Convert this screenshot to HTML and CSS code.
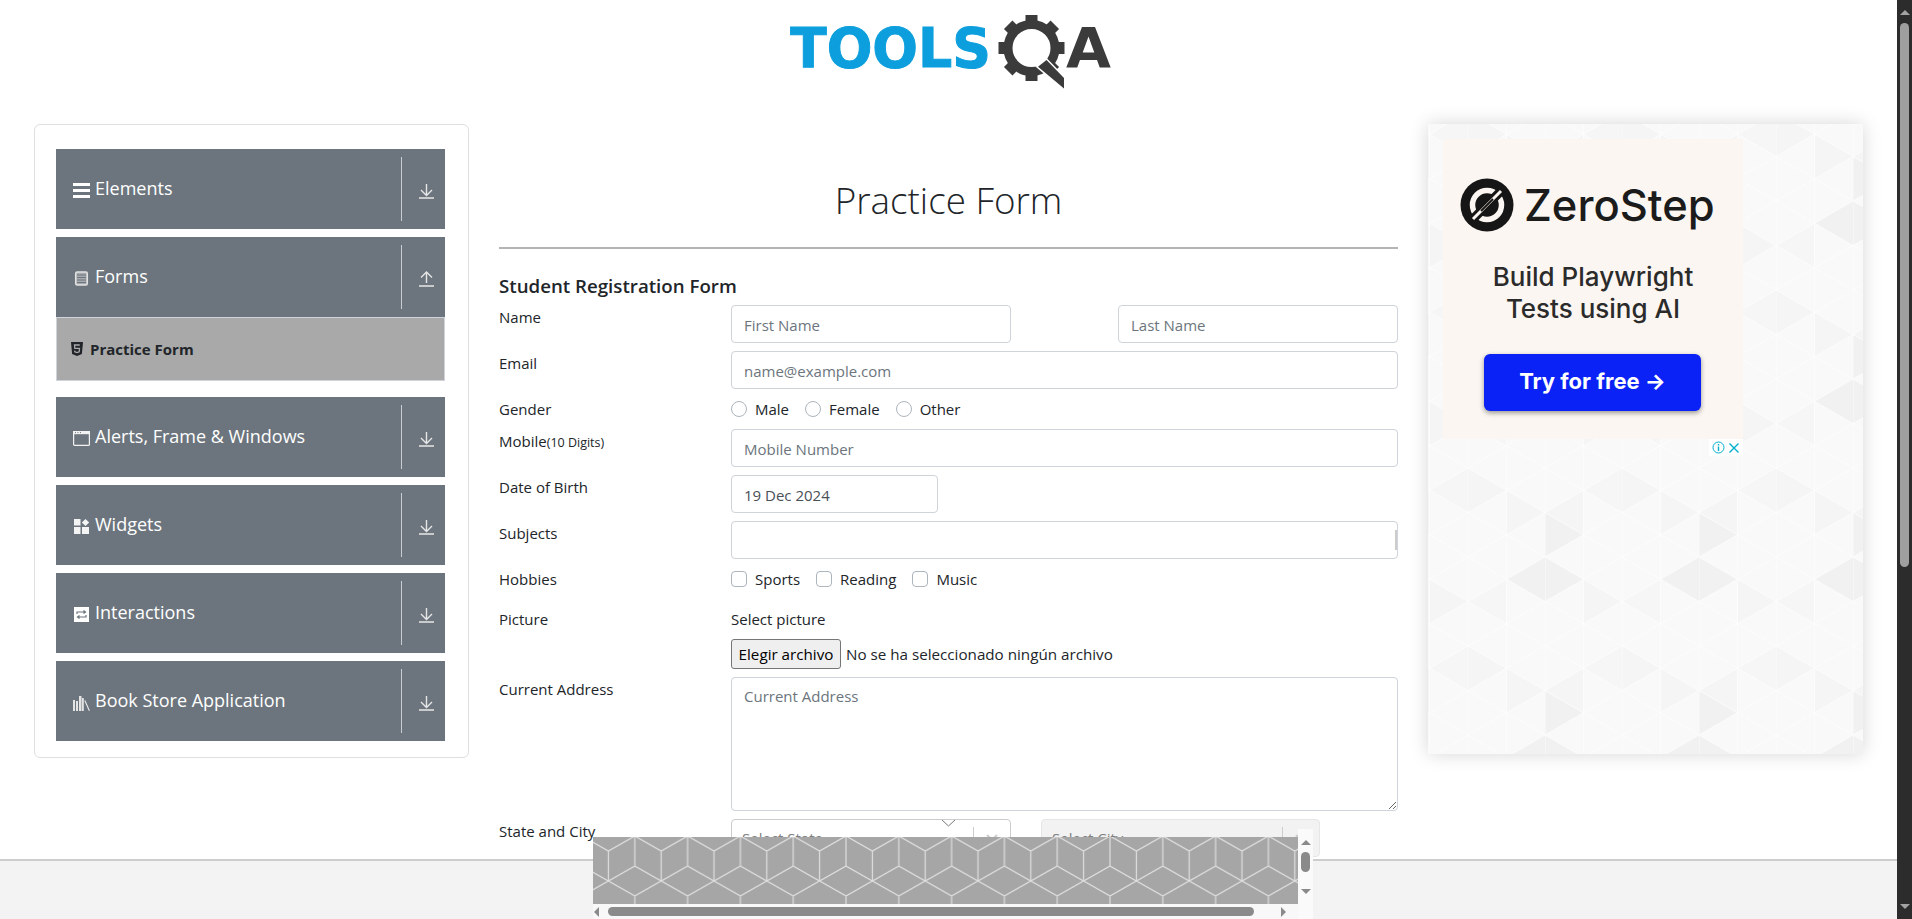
FILE: index.html
```html
<!DOCTYPE html>
<html>
  <head>
    <title>DEMOQA</title>
    <link rel="stylesheet" href="styles.css">
  </head>
  <body>
    <div class="window">
      <div class="page">
        <div class="page-body">
          <header class="logo-bar">
            <svg class="logo" width="330" height="92" viewBox="0 0 330 92">
              <text class="logo-tools" x="0" y="67" textLength="201" lengthAdjust="spacingAndGlyphs">TOOLS</text>
              <g class="gear-teeth">
                <rect x="235.500" y="15" width="12" height="66"/>
                <rect x="235.500" y="15" width="12" height="66" transform="rotate(45 241.500 48)"/>
                <rect x="235.500" y="15" width="12" height="66" transform="rotate(90 241.500 48)"/>
                <rect x="235.500" y="15" width="12" height="66" transform="rotate(135 241.500 48)"/>
              </g>
              <circle class="gear-ring" cx="241.500" cy="48" r="23.500"/>
              <path class="gear-handle" d="M256.500 60L274 78V88.500L248 66.700Z"/>
              <text class="logo-a" x="276" y="67" textLength="45" lengthAdjust="spacingAndGlyphs">A</text>
            </svg>
          </header>

          <div class="columns">
            <nav class="side-card">
              <div class="menu-item">
                <div class="menu-label">
                  <svg class="menu-icon" width="17" height="15" viewBox="0 0 17 15"><path fill="#fff" d="M0 0h17v3H0zM0 6h17v3H0zM0 12h17v3H0z"/></svg>
                  <span class="menu-text">Elements</span>
                </div>
                <div class="menu-toggle">
                  <svg width="15" height="16" viewBox="0 0 15 16"><path class="arrow-line" d="M0 15h15M7.500 1v11M2 7l5.500 5.500L13 7"/></svg>
                </div>
              </div>

              <div class="menu-group">
                <div class="menu-item">
                  <div class="menu-label">
                    <svg class="menu-icon" width="17" height="15" viewBox="0 0 17 15"><rect x="2.700" y="1" width="11.600" height="13" rx="1.500" fill="#a8abb0" stroke="#e2e2e2" stroke-width="1.500"/><path stroke="#6c757d" d="M4 4h9M4 6.500h9M4 9h9M4 11.500h9"/></svg>
                    <span class="menu-text">Forms</span>
                  </div>
                  <div class="menu-toggle">
                    <svg width="15" height="16" viewBox="0 0 15 16"><path class="arrow-line" d="M0 15h15M7.500 12V1M2 6.500L7.500 1 13 6.500"/></svg>
                  </div>
                </div>
                <div class="sub-item">
                  <svg width="12" height="14" viewBox="0 0 12 14"><path fill="#212529" d="M0 0h12l-1.100 12L6 14l-4.900-2z"/><path fill="none" stroke="#a9a9a9" stroke-width="1.300" d="M8.800 3H3.500l.3 3.300h4.700L8.200 9.800 6 10.500l-2.200-.7-.1-1.200"/></svg>
                  <span>Practice Form</span>
                </div>
              </div>

              <div class="menu-item">
                <div class="menu-label">
                  <svg class="menu-icon" width="17" height="15" viewBox="0 0 17 15"><rect x=".6" y=".6" width="15.800" height="13.800" rx="1" fill="none" stroke="#f2f2f2" stroke-width="1.200"/><path fill="#f2f2f2" d="M0 0h17v3.200H0z"/><path stroke="#6c757d" d="M2 1.600h1M4.500 1.600h1M7 1.600h1"/></svg>
                  <span class="menu-text">Alerts, Frame &amp; Windows</span>
                </div>
                <div class="menu-toggle">
                  <svg width="15" height="16" viewBox="0 0 15 16"><path class="arrow-line" d="M0 15h15M7.500 1v11M2 7l5.500 5.500L13 7"/></svg>
                </div>
              </div>

              <div class="menu-item">
                <div class="menu-label">
                  <svg class="menu-icon" width="17" height="15" viewBox="0 0 17 15"><path fill="#f4f4f4" d="M1 0h6.500v6.500H1zM1 8h6.500v7H1zM9 8h7v7H9zM12.500 0l3.700 3.500-3.700 3.500-3.700-3.500z"/></svg>
                  <span class="menu-text">Widgets</span>
                </div>
                <div class="menu-toggle">
                  <svg width="15" height="16" viewBox="0 0 15 16"><path class="arrow-line" d="M0 15h15M7.500 1v11M2 7l5.500 5.500L13 7"/></svg>
                </div>
              </div>

              <div class="menu-item">
                <div class="menu-label">
                  <svg class="menu-icon" width="17" height="15" viewBox="0 0 17 15"><path fill="#fff" d="M1 0h15v15H1z"/><path fill="none" stroke="#6c757d" stroke-width="1.200" d="M4 7V5h8M10.500 3.500L12.500 5l-2 1.500M13 8v2H5M6.500 8.500L4.500 10l2 1.500"/></svg>
                  <span class="menu-text">Interactions</span>
                </div>
                <div class="menu-toggle">
                  <svg width="15" height="16" viewBox="0 0 15 16"><path class="arrow-line" d="M0 15h15M7.500 1v11M2 7l5.500 5.500L13 7"/></svg>
                </div>
              </div>

              <div class="menu-item">
                <div class="menu-label">
                  <svg class="menu-icon" width="17" height="16" viewBox="0 0 17 16"><path fill="#e4e4e4" d="M0 5h2v11H0zM3 6h2v10H3zM6 1h2.500v15H6zM9 3h1.800v13H9z"/><path stroke="#e4e4e4" stroke-width="1.200" d="M11.800 5.500l4.600 10.300"/></svg>
                  <span class="menu-text">Book Store Application</span>
                </div>
                <div class="menu-toggle">
                  <svg width="15" height="16" viewBox="0 0 15 16"><path class="arrow-line" d="M0 15h15M7.500 1v11M2 7l5.500 5.500L13 7"/></svg>
                </div>
              </div>
            </nav>

            <main class="form-column">
              <h1 class="form-title">Practice Form</h1>
              <hr class="title-rule">
              <h5 class="form-heading">Student Registration Form</h5>
              <form class="student-form">
                <label class="field-label">Name</label>
                <div class="name-pair">
                  <input class="text-input" placeholder="First Name">
                  <input class="text-input" placeholder="Last Name">
                </div>

                <label class="field-label">Email</label>
                <input class="text-input" placeholder="name@example.com">

                <label class="field-label">Gender</label>
                <div class="choice-row">
                  <label class="choice"><input class="radio" type="radio" name="gender"><span>Male</span></label>
                  <label class="choice"><input class="radio" type="radio" name="gender"><span>Female</span></label>
                  <label class="choice"><input class="radio" type="radio" name="gender"><span>Other</span></label>
                </div>

                <label class="field-label">Mobile<small>(10 Digits)</small></label>
                <input class="text-input" placeholder="Mobile Number">

                <label class="field-label">Date of Birth</label>
                <input class="text-input date-input" value="19 Dec 2024">

                <label class="field-label">Subjects</label>
                <div class="text-input subjects-input"><span class="subjects-bar"></span></div>

                <label class="field-label hobbies-gap">Hobbies</label>
                <div class="choice-row hobbies-gap">
                  <label class="choice"><input class="check" type="checkbox"><span>Sports</span></label>
                  <label class="choice"><input class="check" type="checkbox"><span>Reading</span></label>
                  <label class="choice"><input class="check" type="checkbox"><span>Music</span></label>
                </div>

                <label class="field-label picture-label">Picture</label>
                <div class="picture-field">
                  <div class="picture-caption">Select picture</div>
                  <div class="file-row">
                    <button class="file-button" type="button">Elegir archivo</button>
                    <span>No se ha seleccionado ningún archivo</span>
                  </div>
                </div>

                <label class="field-label">Current Address</label>
                <textarea class="text-input address-input" placeholder="Current Address"></textarea>

                <label class="field-label">State and City</label>
                <div class="select-pair">
                  <div class="fake-select">
                    <span class="select-text">Select State</span>
                    <span class="select-arrow"><svg width="12" height="8" viewBox="0 0 12 8"><path d="M1 1l5 5 5-5" fill="none" stroke="#ccc" stroke-width="2"/></svg></span>
                  </div>
                  <div class="fake-select is-disabled">
                    <span class="select-text">Select City</span>
                    <span class="select-arrow"><svg width="12" height="8" viewBox="0 0 12 8"><path d="M1 1l5 5 5-5" fill="none" stroke="#ccc" stroke-width="2"/></svg></span>
                  </div>
                </div>
              </form>
            </main>

            <aside class="side-ad">
              <svg class="ad-pattern" width="435" height="630">
                <defs>
                  <pattern id="adShades" width="154" height="178" patternUnits="userSpaceOnUse" patternTransform="translate(40 -12)">
                    <path fill="#f1f1f1" d="M77 89v44.500l-38.500-22.250zM77 89v44.500l38.500-22.250zM77 89V44.500l38.500 22.250z"/>
                    <path fill="#f5f5f5" d="M0 0v44.500l38.500-22.250zM115.500 111.250v44.500L154 133.500zM38.500 22.250v44.500L77 44.500zM115.500 22.250v44.500L77 44.500z"/>
                    <path fill="#f6f6f6" d="M38.500 111.250V155.750L0 133.500zM154 0v44.500L115.500 22.250z"/>
                  </pattern>
                  <pattern id="adLines" width="77" height="89" patternUnits="userSpaceOnUse" patternTransform="translate(40 -12)">
                    <path fill="none" stroke="#fdfdfd" stroke-width=".7" d="M0 0V89M38.500 0V89M0 0L77 44.500M0 44.500L77 89M0 89L77 44.500M0 44.500L77 0"/>
                  </pattern>
                </defs>
                <rect width="435" height="630" fill="#f9f9f9"/>
                <rect width="435" height="630" fill="url(#adShades)"/>
                <rect width="435" height="630" fill="url(#adLines)"/>
              </svg>
              <div class="ad-creative">
                <div class="ad-brand">
                  <svg width="54" height="54" viewBox="0 0 54 54">
                    <circle cx="27" cy="27" r="26.500" fill="#161616"/>
                    <circle cx="27" cy="27" r="14.500" fill="none" stroke="#fbf6f1" stroke-width="5.500"/>
                    <path stroke="#161616" stroke-width="9" d="M12 42L42 12"/>
                    <path stroke="#fbf6f1" stroke-width="3" d="M13 41L41 13"/>
                    <path stroke="#161616" stroke-width="2" d="M21 33l12-12"/>
                  </svg>
                  <span>ZeroStep</span>
                </div>
                <div class="ad-copy">Build Playwright<br>Tests using AI</div>
                <div class="ad-button">Try for free →</div>
                <div class="ad-choices">
                  <svg width="13" height="13" viewBox="0 0 13 13"><circle cx="6.500" cy="6.500" r="5.500" fill="none" stroke="#00aecd"/><path stroke="#00aecd" stroke-width="1.400" d="M6.500 5.500v4.500M6.500 3v1.400"/></svg>
                  <svg width="12" height="12" viewBox="0 0 12 12"><path stroke="#00aecd" stroke-width="1.400" d="M1.500 1.500l9 9M10.500 1.500l-9 9"/></svg>
                </div>
              </div>
            </aside>
          </div>
        </div>
        <footer class="footer-strip"></footer>
      </div>

      <div class="page-scrollbar">
        <span class="arrow-up page-arrow"></span>
        <span class="page-thumb"></span>
        <span class="arrow-down page-arrow"></span>
      </div>
    </div>

    <div class="bottom-ad">
      <svg class="bottom-ad-chevron" width="15" height="8" viewBox="0 0 15 8"><path d="M1 1l6.500 6L14 1" fill="none" stroke="#777"/></svg>
      <div class="bottom-ad-main">
        <svg class="bottom-ad-art" width="705" height="67">
          <defs>
            <pattern id="cubes" width="52.800" height="90" patternUnits="userSpaceOnUse" patternTransform="translate(41.800 -1)">
              <path fill="none" stroke="#dedede" stroke-width="1.200" d="M0 0L26.400 15 52.800 0M0 90L26.400 75 52.800 90M26.400 15V45M0 30L26.400 45 52.800 30M0 60L26.400 45 52.800 60M0 0V30M52.800 0V30M0 60V90M52.800 60V90"/>
            </pattern>
          </defs>
          <rect width="705" height="67" fill="#a6a6a6"/>
          <rect width="705" height="67" fill="url(#cubes)"/>
        </svg>
        <div class="h-scrollbar">
          <span class="arrow-left"></span>
          <span class="h-thumb"></span>
          <span class="arrow-right"></span>
        </div>
      </div>
      <div class="v-scrollbar">
        <span class="arrow-up"></span>
        <span class="v-thumb"></span>
        <span class="arrow-down"></span>
      </div>
    </div>
  </body>
</html>
```

FILE: styles.css
```css
* {
  box-sizing: border-box;
}
body {
  margin: 0;
  font-family: "Open Sans", sans-serif;
  font-size: 15px;
  line-height: 24px;
  color: #212529;
  background: #fff;
  overflow: hidden;
}
.window {
  display: flex;
  height: 100vh;
}
.page {
  flex: 1;
  min-width: 0;
  display: flex;
  flex-direction: column;
}
.page-body {
  flex: 1;
  min-height: 0;
  overflow: hidden;
}
.footer-strip {
  height: 60px;
  background: #f3f3f3;
  border-top: 2px solid #cdcdcd;
}

/* logo */
.logo-bar {
  height: 124px;
  padding-left: 790px;
}
.logo {
  display: block;
}
.logo-tools {
  font-family: "DejaVu Sans", sans-serif;
  font-weight: 700;
  font-size: 55px;
  fill: #0d9fdd;
  stroke: #0d9fdd;
  stroke-width: 1;
}
.logo-a {
  font-family: "DejaVu Sans", sans-serif;
  font-weight: 700;
  font-size: 55px;
  fill: #3b3b3b;
}
.gear-teeth {
  fill: #3b3b3b;
}
.gear-ring {
  fill: #fff;
  stroke: #3b3b3b;
  stroke-width: 9;
}
.gear-handle {
  fill: #3b3b3b;
  stroke: #fff;
  stroke-width: 3;
  paint-order: stroke;
}

.columns {
  display: flex;
  align-items: flex-start;
  padding-left: 34px;
}

/* left menu */
.side-card {
  width: 435px;
  flex: none;
  padding: 24px 23px 16px 21px;
  border: 1px solid #dfdfdf;
  border-radius: 6px;
  display: flex;
  flex-direction: column;
  gap: 8px;
}
.menu-item {
  height: 80px;
  padding: 8px 0;
  background: #6c757d;
  color: #fff;
  display: flex;
}
.menu-label {
  flex: 1;
  display: flex;
  align-items: center;
  gap: 5px;
  padding-left: 17px;
}
.menu-icon {
  flex: none;
  margin-top: 3px;
}
.menu-text {
  font-size: 18px;
  margin-top: -3px;
}
.menu-toggle {
  width: 44px;
  flex: none;
  border-left: 1px solid #c9ccd0;
  padding-left: 17px;
  display: flex;
  align-items: center;
}
.menu-toggle svg {
  margin-top: 4px;
}
.arrow-line {
  fill: none;
  stroke: #e6e6e6;
  stroke-width: 1.400;
}
.sub-item {
  height: 64px;
  margin-bottom: 8px;
  background: #a9a9a9;
  border: 1px solid #ced4da;
  padding-left: 14px;
  display: flex;
  align-items: center;
  gap: 7px;
  font-size: 15px;
  font-weight: 700;
}

/* form */
.form-column {
  width: 899px;
  flex: none;
  margin-left: 30px;
}
.form-title {
  margin: 52px 0 23px;
  font-size: 36.800px;
  line-height: 48px;
  font-weight: 300;
  text-align: center;
}
.title-rule {
  margin: 0;
  border: 0;
  height: 2px;
  background: #b4b4b4;
}
.form-heading {
  margin: 25px 0 7px;
  font-size: 18.700px;
  line-height: 24px;
  font-weight: 600;
}
.student-form {
  display: grid;
  grid-template-columns: 232px 1fr;
  row-gap: 8px;
}
.field-label small {
  font-size: 12.500px;
}
.picture-label,
.picture-caption {
  margin-top: -1px;
}
.hobbies-gap {
  margin-bottom: 9px;
}
.name-pair {
  display: flex;
  justify-content: space-between;
}
.name-pair .text-input {
  width: 280px;
}
.text-input {
  display: block;
  width: 100%;
  height: 38px;
  padding: 7px 12px 5px;
  border: 1px solid #ced4da;
  border-radius: 4px;
  font: inherit;
  color: #495057;
  background: #fff;
}
.text-input::placeholder {
  color: #6c757d;
}
.date-input {
  width: 207px;
}
.subjects-input {
  display: flex;
  align-items: center;
  justify-content: flex-end;
  padding: 0;
}
.subjects-bar {
  width: 2px;
  height: 20px;
  background: #ccc;
}
.address-input {
  height: 134px;
  padding-top: 6px;
}
.choice-row {
  display: flex;
  gap: 16px;
}
.choice {
  display: flex;
  align-items: center;
  gap: 8px;
}
.radio,
.check {
  appearance: none;
  width: 16px;
  height: 16px;
  margin: 0;
  background: #fff;
  border: 1px solid #adb5bd;
}
.radio {
  border-radius: 50%;
}
.check {
  border-radius: 4px;
}
.picture-caption {
  margin-bottom: 8px;
}
.file-row {
  display: flex;
  align-items: center;
  gap: 5px;
  height: 30px;
  font-size: 15.200px;
}
.file-button {
  width: 110px;
  height: 30px;
  padding: 0;
  font: inherit;
  color: #000;
  background: #efefef;
  border: 1px solid #767676;
  border-radius: 3px;
}
.select-pair {
  display: flex;
  gap: 30px;
}
.fake-select {
  width: 280px;
  height: 38px;
  border: 1px solid #ccc;
  border-radius: 4px;
  background: #fff;
  display: flex;
  align-items: center;
  padding-left: 10px;
}
.fake-select.is-disabled {
  width: 279px;
  background: #f2f2f2;
  border-color: #e6e6e6;
}
.select-text {
  flex: 1;
  color: #808080;
}
.select-arrow {
  width: 37px;
  height: 22px;
  border-left: 1px solid #ccc;
  display: flex;
  align-items: center;
  justify-content: center;
}

/* right ad */
.side-ad {
  position: relative;
  width: 435px;
  height: 630px;
  flex: none;
  margin-left: 30px;
  padding: 15px;
  box-shadow: 0 0 18px rgba(0, 0, 0, 0.16);
}
.ad-pattern {
  position: absolute;
  top: 0;
  left: 0;
}
.ad-creative {
  position: relative;
  width: 300px;
  height: 300px;
  background: #fbf6f1;
  font-family: Inter, sans-serif;
}
.ad-brand {
  display: flex;
  align-items: center;
  gap: 10px;
  padding: 39px 0 0 17px;
  height: 92px;
  font-size: 43.500px;
  line-height: 54px;
  font-weight: 500;
  color: #1b1b1b;
}
.ad-copy {
  margin-top: 30px;
  text-align: center;
  font-size: 26px;
  line-height: 32px;
  font-weight: 500;
  color: #2b2b2b;
}
.ad-button {
  margin: 29px 0 0 41px;
  width: 217px;
  height: 57px;
  background: #0a22f5;
  border-radius: 6px;
  box-shadow: 0 2px 5px rgba(0, 0, 0, 0.4);
  color: #fff;
  font-size: 22px;
  font-weight: 700;
  line-height: 54px;
  text-align: center;
}
.ad-choices {
  position: absolute;
  top: 300px;
  right: 0;
  width: 34px;
  height: 17px;
  background: #fff;
  display: flex;
  align-items: center;
  justify-content: center;
  gap: 3px;
}

/* scrollbars */
.page-scrollbar {
  width: 15px;
  flex: none;
  background: #2c2c2c;
  display: flex;
  flex-direction: column;
  align-items: center;
  padding-top: 10px;
}
.page-thumb {
  width: 9px;
  height: 544px;
  margin-top: 8px;
  background: #9f9f9f;
  border-radius: 5px;
}
.arrow-up,
.arrow-down {
  width: 0;
  height: 0;
  border-left: 5px solid transparent;
  border-right: 5px solid transparent;
}
.arrow-up {
  border-bottom: 5px solid #8a8a8a;
}
.arrow-down {
  border-top: 5px solid #8a8a8a;
}
.page-arrow.arrow-up {
  border-bottom-color: #a3a3a3;
}
.page-arrow.arrow-down {
  border-top-color: #a3a3a3;
  margin-top: 337px;
}
.arrow-left,
.arrow-right {
  width: 0;
  height: 0;
  border-top: 5px solid transparent;
  border-bottom: 5px solid transparent;
}
.arrow-left {
  border-right: 5px solid #8a8a8a;
}
.arrow-right {
  border-left: 5px solid #8a8a8a;
}

/* bottom ad */
.bottom-ad {
  position: fixed;
  left: 593px;
  bottom: 0;
  width: 720px;
  height: 90px;
  display: flex;
}
.bottom-ad-chevron {
  position: absolute;
  top: -10px;
  left: 348px;
}
.bottom-ad-main {
  width: 705px;
  margin-top: 8px;
}
.bottom-ad-art {
  display: block;
}
.h-scrollbar {
  height: 15px;
  background: #f8f8f8;
  display: flex;
  align-items: center;
  padding-left: 1px;
}
.h-thumb {
  width: 646px;
  height: 9px;
  margin: 0 27px 0 9px;
  background: #8a8a8a;
  border-radius: 5px;
}
.v-scrollbar {
  width: 15px;
  background: #fafafa;
  display: flex;
  flex-direction: column;
  align-items: center;
  padding-top: 11px;
}
.v-thumb {
  width: 9px;
  height: 20px;
  margin: 7px 0 17px;
  background: #8a8a8a;
  border-radius: 5px;
}
```
